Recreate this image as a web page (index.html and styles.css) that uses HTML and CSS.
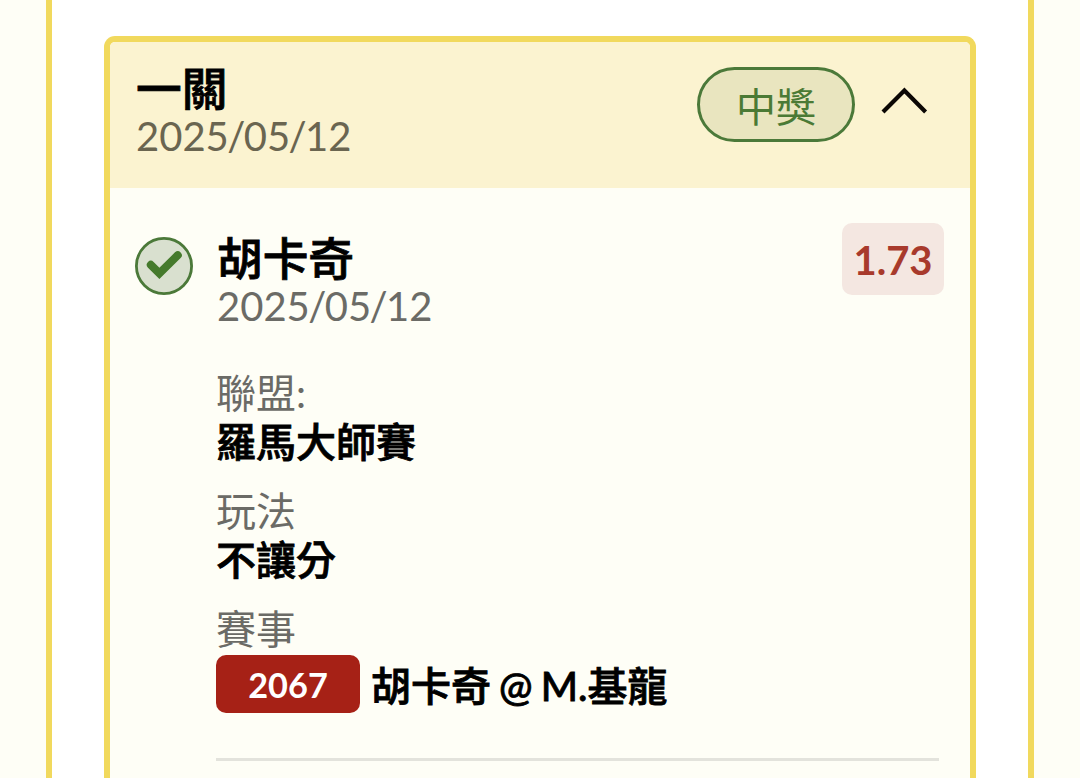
FILE: index.html
```html
<!DOCTYPE html>
<html lang="zh-TW">
<head>
<meta charset="UTF-8" />
<meta name="viewport" content="width=device-width, initial-scale=1" />
<title>投注紀錄</title>
<link rel="stylesheet" href="styles.css">
</head>
<body>

<main class="panel">
  <section class="card">
    <header class="card-header">
      <div>
        <h2 class="title">一關</h2>
        <p class="date">2025<span>/</span>05<span>/</span>12</p>
      </div>
      <div class="header-right">
        <span class="status">中獎</span>
        <svg class="arrow" width="48" height="30" viewBox="0 0 48 30">
          <path d="M3 26 L24.4 4.6 L45.6 26" fill="none" stroke="#0b0704" stroke-width="4.2" />
        </svg>
      </div>
    </header>

    <div class="bet">
      <svg class="check" width="58" height="58" viewBox="0 0 58 58">
        <circle cx="29" cy="29" r="27.6" fill="#d9e0cf" stroke="#4b7939" stroke-width="2.8" />
        <path d="M15.8 27.8 L24.4 36.4 L42.8 18.2" fill="none" stroke="#457a2c" stroke-width="8" stroke-linecap="round" />
      </svg>

      <div class="bet-body">
        <div class="bet-top">
          <div>
            <h3 class="title">胡卡奇</h3>
            <p class="date">2025<span>/</span>05<span>/</span>12</p>
          </div>
          <span class="odds">1.73</span>
        </div>

        <dl class="info">
          <div class="field">
            <dt>聯盟:</dt>
            <dd>羅馬大師賽</dd>
          </div>
          <div class="field">
            <dt>玩法</dt>
            <dd>不讓分</dd>
          </div>
          <div class="field">
            <dt>賽事</dt>
            <dd class="match"><span class="code">2067</span><span class="teams">胡卡奇 @ M.基龍</span></dd>
          </div>
        </dl>

        <hr class="line">
      </div>
    </div>
  </section>
</main>

</body>
</html>
```
FILE: styles.css
```css
* {
  box-sizing: border-box;
}
body {
  margin: 0;
  height: 778px;
  background: #fefef6;
  color: #000;
  font-family: Lato, "Noto Sans CJK TC", sans-serif;
  font-size: 40px;
}
h2, h3, p, dl, dd {
  margin: 0;
}
.panel {
  width: 988px;
  height: 778px;
  margin-left: 46px;
  padding: 36px 52px 0;
  background: #fff;
  border: solid #f1d95d;
  border-width: 0 6px;
}
/* Cartão */
.card {
  height: 742px;
  background: #fefef6;
  border: 6px solid #f1d95d;
  border-bottom: none;
  border-radius: 11px 11px 0 0;
  overflow: hidden;
}
.card-header {
  display: flex;
  justify-content: space-between;
  height: 146px;
  padding: 23px 42px 0 26px;
  background: #fbf3d0;
}
.title {
  font-size: 45.7px;
  font-weight: 500;
  line-height: 48px;
  -webkit-text-stroke: 0.8px #000;
}
.date {
  color: #6b6b66;
  line-height: 47px;
}
.date span {
  margin: 0 -1.6px;
}
.card-header .date {
  color: #6a6550;
}
.header-right {
  display: flex;
  align-items: flex-start;
  gap: 25px;
  padding-top: 2px;
}
.status {
  width: 158px;
  height: 75px;
  border: 3px solid #4b7939;
  border-radius: 38px;
  background: #e9e5bf;
  color: #4b7a35;
  line-height: 74px;
  text-align: center;
}
.arrow {
  margin-top: 19px;
}
/* Aposta */
.bet {
  display: flex;
  gap: 23px;
  padding: 35px 26px 0 25px;
}
.check {
  flex: none;
  margin-top: 14px;
}
.bet-body {
  flex: 1;
}
.bet-top {
  display: flex;
  justify-content: space-between;
  height: 146px;
  padding-left: 1px;
}
.bet-top .title {
  margin-top: 12px;
}
.odds {
  width: 102px;
  height: 72px;
  border-radius: 10px;
  background: #f4e7e1;
  color: #a83a2c;
  font-weight: 700;
  line-height: 74px;
  text-align: center;
}
.info {
  display: flex;
  flex-direction: column;
  gap: 20px;
  line-height: 49px;
}
.field dt {
  color: #6b6b66;
}
.field dd {
  font-weight: 500;
  -webkit-text-stroke: 0.8px #000;
}
.match {
  display: flex;
  align-items: center;
  gap: 11px;
  padding-top: 1px;
}
.code {
  width: 144px;
  height: 58px;
  border-radius: 10px;
  background: #a62116;
  color: #fff;
  font-size: 34.3px;
  font-weight: 700;
  line-height: 59px;
  text-align: center;
  -webkit-text-stroke: 0;
}
.teams {
  padding-top: 4px;
  word-spacing: -2px;
}
.line {
  height: 3px;
  margin: 45px 5px 0 0;
  border: none;
  background: #e3e3dc;
}
```
